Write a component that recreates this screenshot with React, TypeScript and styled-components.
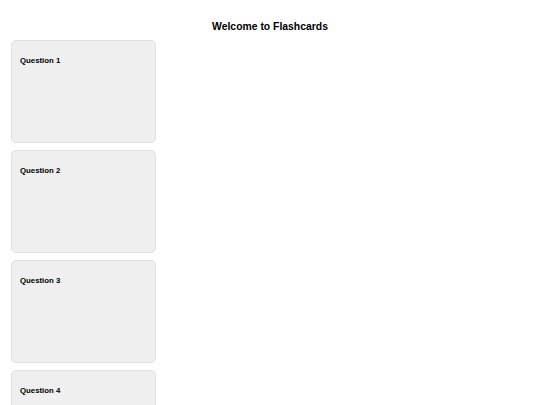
import React from 'react';
import styled, { createGlobalStyle } from 'styled-components';

const GlobalStyle = createGlobalStyle`
  body {
    margin: 0;
    background: #ffffff;
    font-family: 'Liberation Sans', Arial, sans-serif;
    color: #000000;
  }
`;

const Page = styled.div`
  display: flex;
  flex-direction: column;
  padding-top: 20px;
`;

const Title = styled.h1`
  margin: 0 0 6px;
  font-size: 10.4px;
  font-weight: bold;
  text-align: center;
  line-height: 14px;
`;

const CardList = styled.div`
  display: flex;
  flex-direction: column;
  gap: 7px;
  padding-left: 11px;
`;

const Card = styled.div`
  box-sizing: border-box;
  width: 145px;
  height: 103px;
  padding: 15px 8px;
  background-color: #efefef;
  border: 1px solid #e0e0e0;
  border-radius: 5px;
`;

const Question = styled.div`
  font-size: 7.8px;
  font-weight: bold;
  line-height: 10px;
`;

const questions = ['Question 1', 'Question 2', 'Question 3', 'Question 4'];

const App: React.FC = () => {
  return (
    <Page>
      <GlobalStyle />
      <Title>Welcome to Flashcards</Title>
      <CardList>
        {questions.map(q => (
          <Card key={q}>
            <Question>{q}</Question>
          </Card>
        ))}
      </CardList>
    </Page>
  );
};

export default App;
